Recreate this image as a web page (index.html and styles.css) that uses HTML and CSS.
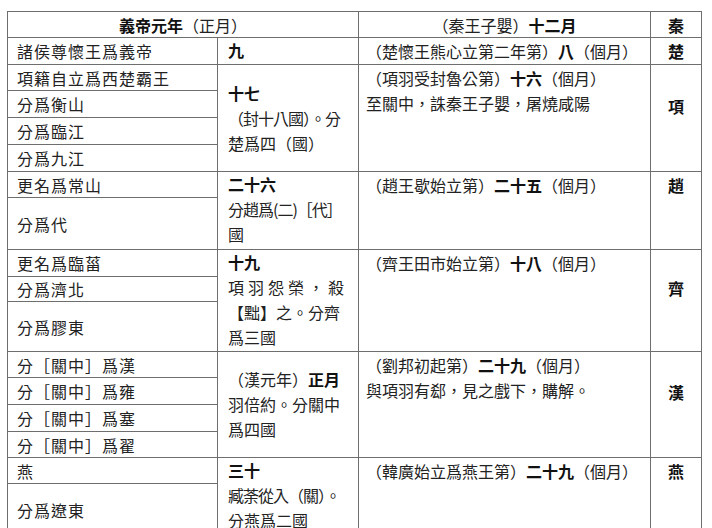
FILE: index.html
```html
<!DOCTYPE html>
<html lang="zh-Hant">
<head>
<meta charset="utf-8">
<title>秦楚之際月表</title>
<link rel="stylesheet" href="styles.css">
</head>
<body>
<table class="chron">
  <colgroup>
    <col class="c1"><col class="c2"><col class="c3"><col class="c4">
  </colgroup>
  <tr class="h26">
    <th class="hd" colspan="2"><b>義帝元年</b>（正月）</th>
    <th class="hd">（秦王子嬰）<b>十二月</b></th>
    <th class="st">秦</th>
  </tr>
  <tr class="h26">
    <td class="name">諸侯尊懷王爲義帝</td>
    <td class="yr"><b>九</b></td>
    <td class="ev">（楚懷王熊心立第二年第）<b>八</b>（個月）</td>
    <td class="st">楚</td>
  </tr>
  <tr class="h26">
    <td class="name">項籍自立爲西楚霸王</td>
    <td class="yr mid" rowspan="4"><b>十七</b><br><span class="tight">（封十八國）。分</span><br>楚爲四（國）</td>
    <td class="ev" rowspan="4">（項羽受封魯公第）<b>十六</b>（個月）<br>至關中，誅秦王子嬰，屠燒咸陽</td>
    <td class="st low" rowspan="4">項</td>
  </tr>
  <tr class="h27"><td class="name">分爲衡山</td></tr>
  <tr class="h27"><td class="name">分爲臨江</td></tr>
  <tr class="h27"><td class="name">分爲九江</td></tr>
  <tr class="h26">
    <td class="name">更名爲常山</td>
    <td class="yr" rowspan="2"><b>二十六</b><br><span class="tight">分趙爲(二)［代］</span><br>國</td>
    <td class="ev" rowspan="2">（趙王歇始立第）<b>二十五</b>（個月）</td>
    <td class="st" rowspan="2">趙</td>
  </tr>
  <tr class="h52"><td class="name">分爲代</td></tr>
  <tr class="h27">
    <td class="name">更名爲臨菑</td>
    <td class="yr" rowspan="3"><b>十九</b><br><span class="wide">項羽怨榮，殺</span><br>【黜】之。分齊<br>爲三國</td>
    <td class="ev" rowspan="3">（齊王田市始立第）<b>十八</b>（個月）</td>
    <td class="st low" rowspan="3">齊</td>
  </tr>
  <tr class="h25"><td class="name">分爲濟北</td></tr>
  <tr class="h50"><td class="name">分爲膠東</td></tr>
  <tr class="h26">
    <td class="name">分［關中］爲漢</td>
    <td class="yr mid" rowspan="4">（漢元年）<b>正月</b><br>羽倍約。分關中<br>爲四國</td>
    <td class="ev" rowspan="4">（劉邦初起第）<b>二十九</b>（個月）<br>與項羽有郄，見之戲下，購解。</td>
    <td class="st low" rowspan="4">漢</td>
  </tr>
  <tr class="h27"><td class="name">分［關中］爲雍</td></tr>
  <tr class="h27"><td class="name">分［關中］爲塞</td></tr>
  <tr class="h26"><td class="name">分［關中］爲翟</td></tr>
  <tr class="h26">
    <td class="name">燕</td>
    <td class="yr" rowspan="2"><b>三十</b><br><span class="tight">臧荼從入（關）。</span><br>分燕爲二國</td>
    <td class="ev" rowspan="2">（韓廣始立爲燕王第）<b>二十九</b>（個月）</td>
    <td class="st" rowspan="2">燕</td>
  </tr>
  <tr class="h52"><td class="name">分爲遼東</td></tr>
</table>
</body>
</html>
```

FILE: styles.css
```css
html, body {
  overflow: hidden;
}
body {
  margin: 11px 0 0 7px;
  background: #ffffff;
  color: #222222;
  font-family: "Noto Sans CJK TC", "Noto Sans CJK SC", "Noto Sans", sans-serif;
  font-size: 16px;
}
.chron {
  border-collapse: collapse;
  table-layout: fixed;
  width: 694px;
}
.c1 { width: 210px; }
.c2 { width: 141px; }
.c3 { width: 292px; }
.c4 { width: 51px; }

.chron th,
.chron td {
  border: 1px solid #6e6e6e;
  padding: 0;
  line-height: 24px;
  vertical-align: top;
  white-space: nowrap;
  overflow: hidden;
}
.chron th { font-weight: normal; }
.chron b { font-weight: 700; color: #111111; }

.h25 { height: 25px; }
.h26 { height: 26px; }
.h27 { height: 27px; }
.h50 { height: 50px; }
.h52 { height: 52px; }

.chron th.hd { text-align: center; vertical-align: middle; }

.chron td.name {
  padding-left: 9px;
  letter-spacing: 1px;
  vertical-align: middle;
}

.chron td.yr {
  padding-left: 10px;
  line-height: 25px;
}
.chron td.mid { vertical-align: middle; }

.chron td.ev {
  padding-left: 7px;
  padding-top: 1px;
  line-height: 25px;
}

.chron .st {
  text-align: center;
  font-weight: 700;
  color: #111111;
  padding-top: 1px;
}
.chron th.st { vertical-align: middle; padding-top: 0; }
.chron td.low {
  vertical-align: middle;
  padding-bottom: 26px;
}

.tight { letter-spacing: -1px; }
.wide { letter-spacing: 4px; }
```
